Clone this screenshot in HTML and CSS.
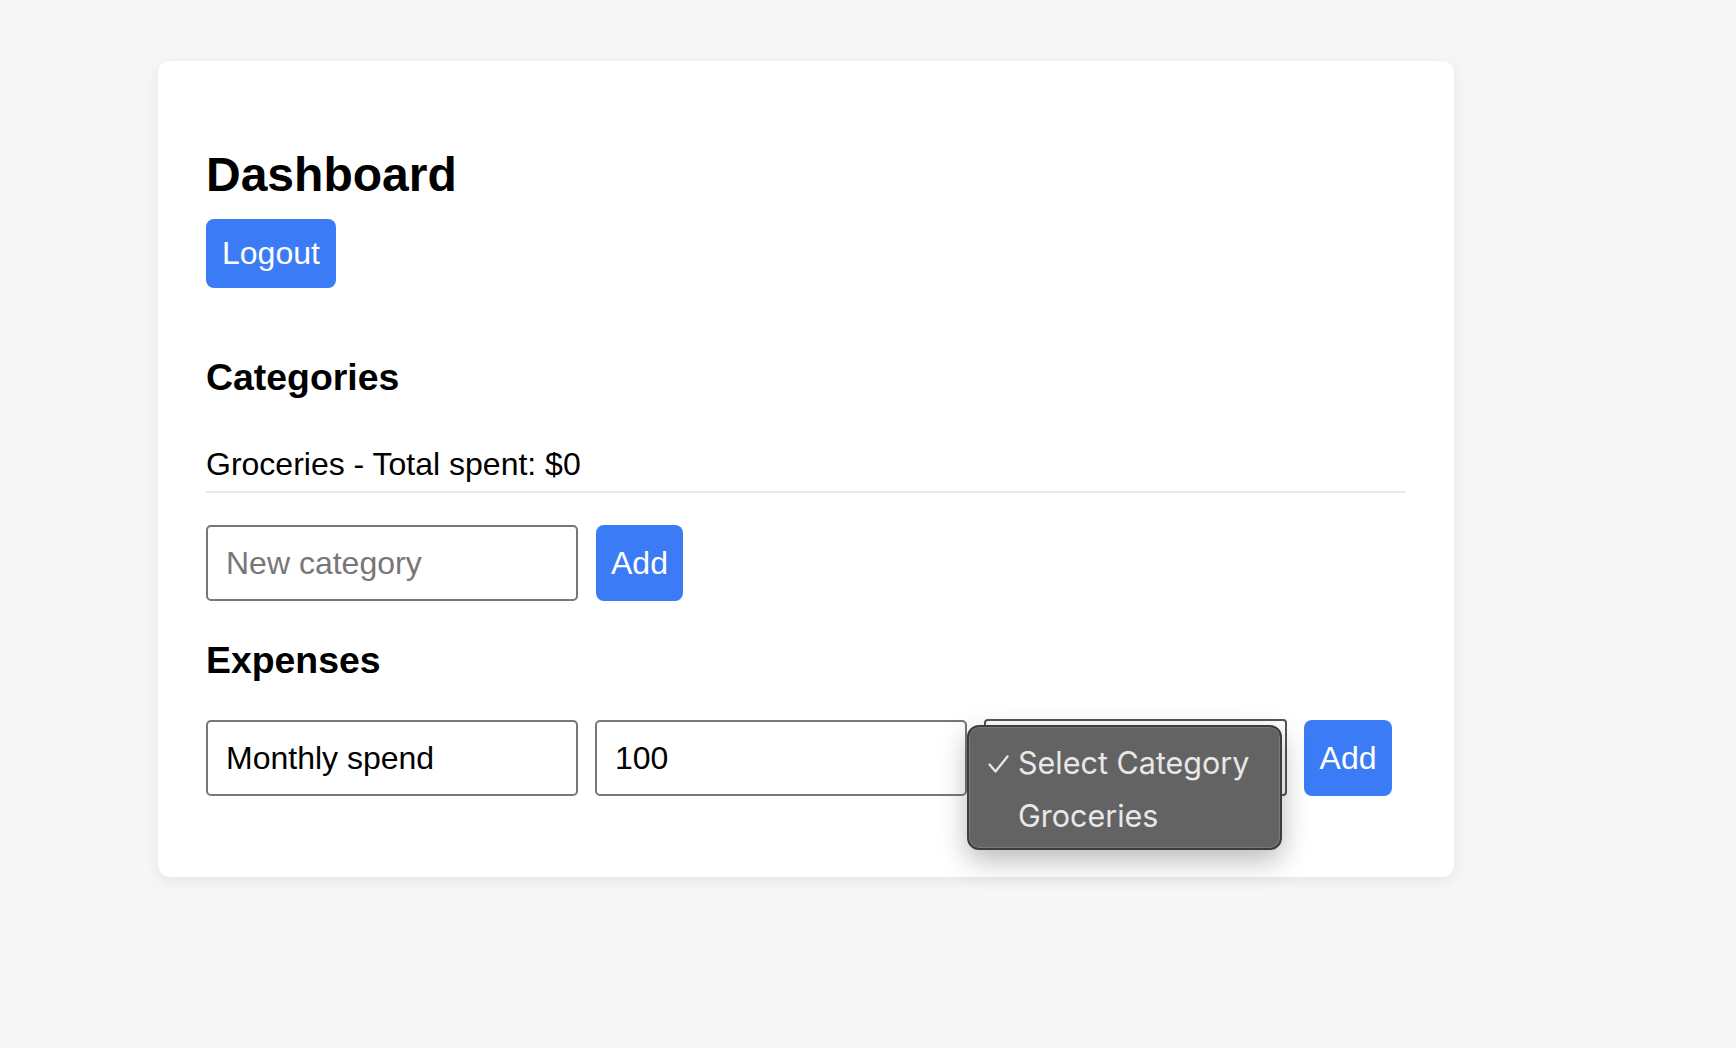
FILE: index.html
```html
<!DOCTYPE html>
<html lang="en">
<head>
<meta charset="utf-8">
<title>Dashboard</title>
<link rel="stylesheet" href="styles.css">
</head>
<body>
<div class="card">
  <h2 class="title">Dashboard</h2>
  <button class="btn btn-logout">Logout</button>

  <h3 class="section-title">Categories</h3>
  <ul class="cat-list">
    <li class="cat-item">Groceries - Total spent: $0</li>
  </ul>
  <div class="form-row form-row-cat">
    <input class="field field-wide" type="text" placeholder="New category">
    <button class="btn">Add</button>
  </div>

  <h3 class="section-title section-exp">Expenses</h3>
  <div class="form-row">
    <input class="field field-wide" type="text" value="Monthly spend">
    <input class="field field-wide" type="text" value="100">
    <div class="select-wrap">
      <div class="select-box"></div>
      <div class="popup">
        <div class="popup-item"><span class="check"><svg width="21" height="18" viewBox="0 0 21 18"><path d="M1.5 9.5 L7.5 16.5 L19.5 1.5" fill="none" stroke="#e8e8e8" stroke-width="2.3" stroke-linecap="round" stroke-linejoin="round"/></svg></span>Select Category</div>
        <div class="popup-item"><span class="check"></span>Groceries</div>
      </div>
    </div>
    <button class="btn btn-add2">Add</button>
  </div>
</div>
</body>
</html>
```
FILE: styles.css
```css
html, body {
  margin: 0;
  padding: 0;
}
body {
  background: #f6f6f6;
  font-family: "Liberation Sans", Arial, sans-serif;
  color: #000;
  padding: 61px 0 0 158px;
  min-height: 1048px;
  box-sizing: border-box;
}
.card {
  width: 1296px;
  box-sizing: border-box;
  background: #fff;
  border-radius: 12px;
  box-shadow: 0 4px 14px rgba(0, 0, 0, 0.07);
  padding: 48px 48px 81px 48px;
}
.title {
  font-size: 48px;
  font-weight: bold;
  line-height: 56px;
  margin: 38px 0 16px 0;
}
.btn {
  font-family: "Liberation Sans", Arial, sans-serif;
  font-size: 32px;
  color: #fff;
  background: #3b7cf6;
  border: none;
  border-radius: 8px;
  padding: 0 15px;
  cursor: pointer;
}
.btn-logout {
  display: block;
  height: 69px;
  padding: 0 16px;
}
.section-title {
  font-size: 37.4px;
  font-weight: bold;
  line-height: 43px;
  margin: 68px 0 0 0;
}
.section-exp {
  margin-top: 38px;
}
.cat-list {
  list-style: none;
  margin: 47px 0 0 0;
  padding: 0;
}
.cat-item {
  font-size: 32px;
  line-height: 37px;
  padding-bottom: 8px;
  border-bottom: 2px solid #e9e9e9;
}
.form-row {
  display: flex;
  gap: 17px;
  margin-top: 38px;
  height: 76px;
}
.form-row-cat {
  margin-top: 32px;
  gap: 18px;
}
.field {
  box-sizing: border-box;
  height: 76px;
  border: 2px solid #777;
  border-radius: 5px;
  padding: 0 18px;
  font-family: "Liberation Sans", Arial, sans-serif;
  font-size: 32px;
  color: #000;
  background: #fff;
  outline: none;
}
.field::placeholder {
  color: #777;
}
.field-wide {
  width: 372px;
}
.select-wrap {
  position: relative;
  width: 303px;
  height: 76px;
}
.select-box {
  box-sizing: border-box;
  height: 77px;
  margin-top: -1px;
  border: 2px solid #555;
  border-radius: 4px;
  background: #fff;
}
.popup {
  position: absolute;
  left: -17px;
  top: 5px;
  width: 315px;
  height: 125px;
  box-sizing: border-box;
  background: #636363;
  border: 2px solid #3d3d3d;
  box-shadow: inset 0 0 0 1px #7a7a7a, 0 10px 28px rgba(0, 0, 0, 0.28);
  border-radius: 12px;
  padding: 9px 0 0 0;
  font-family: Inter, "Noto Sans", sans-serif;
  color: #e8e8e8;
}
.popup-item {
  display: flex;
  align-items: center;
  height: 53px;
  line-height: 53px;
  font-size: 30.5px;
  padding-left: 19px;
}
.check {
  display: inline-flex;
  align-items: center;
  width: 30px;
  height: 53px;
  padding-top: 2px;
  box-sizing: border-box;
}
.btn-add2 {
  width: 88px;
  padding: 0;
}
```
